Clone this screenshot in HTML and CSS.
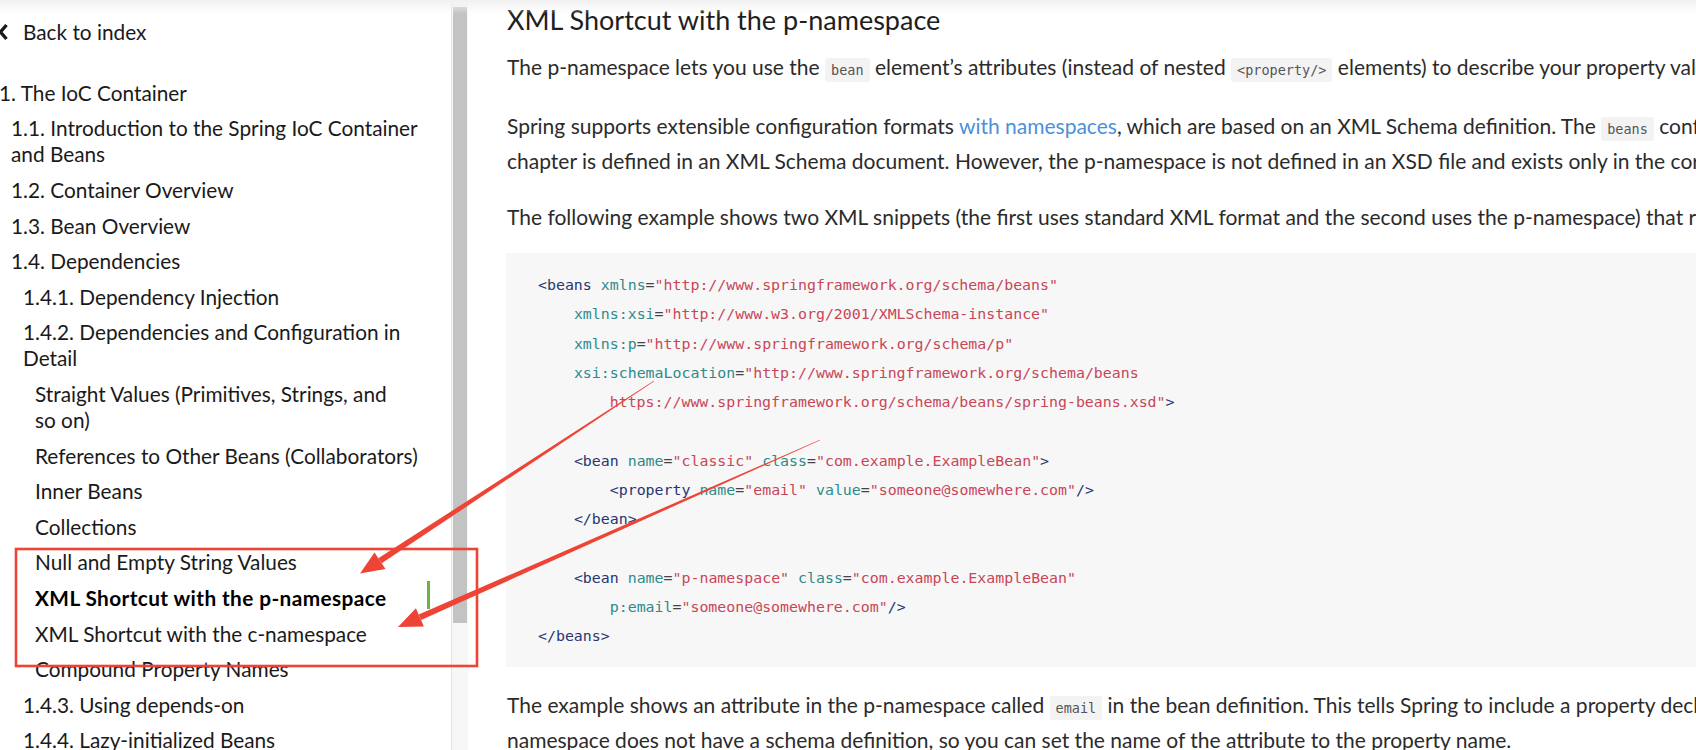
FILE: index.html
```html
<!DOCTYPE html>
<html lang="en">
<head>
<meta charset="utf-8">
<title>XML Shortcut with the p-namespace</title>
<link rel="stylesheet" href="styles.css">
</head>
<body>
<div class="topshade"></div>
<div class="page">
  <aside class="sidebar">
    <a class="back" href="#"><svg class="chev" width="10" height="18" viewBox="0 0 10 18"><polyline points="8.5,2 2.5,9 8.5,16" fill="none" stroke="#1a1a1a" stroke-width="3.4"/></svg><span>Back to index</span></a>
    <ul class="toc">
      <li><a href="#">1. The IoC Container</a>
        <ul>
          <li><a href="#">1.1. Introduction to the Spring IoC Container and Beans</a></li>
          <li><a href="#">1.2. Container Overview</a></li>
          <li><a href="#">1.3. Bean Overview</a></li>
          <li><a href="#">1.4. Dependencies</a>
            <ul>
              <li><a href="#">1.4.1. Dependency Injection</a></li>
              <li><a href="#">1.4.2. Dependencies and Configuration in Detail</a>
                <ul>
                  <li><a href="#">Straight Values (Primitives, Strings, and so&nbsp;on)</a></li>
                  <li><a href="#">References to Other Beans (Collaborators)</a></li>
                  <li><a href="#">Inner Beans</a></li>
                  <li><a href="#">Collections</a></li>
                  <li><a href="#">Null and Empty String Values</a></li>
                  <li><a href="#" class="active">XML Shortcut with the p-namespace</a></li>
                  <li><a href="#">XML Shortcut with the c-namespace</a></li>
                  <li><a href="#">Compound Property Names</a></li>
                </ul>
              </li>
              <li><a href="#">1.4.3. Using depends-on</a></li>
              <li><a href="#">1.4.4. Lazy-initialized Beans</a></li>
            </ul>
          </li>
        </ul>
      </li>
    </ul>
  </aside>
  <div class="scrollbar"><div class="thumb"></div></div>
  <main class="content">
    <h2>XML Shortcut with the p-namespace</h2>
    <p class="first">The p-namespace lets you use the <code>bean</code> element’s attributes (instead of nested <code>&lt;property/&gt;</code> elements) to describe your property values collaborating beans, or both.</p>
    <p>Spring supports extensible configuration formats <a href="#">with namespaces</a>, which are based on an XML Schema definition. The <code>beans</code> configuration format discussed in this<br>chapter is defined in an XML Schema document. However, the p-namespace is not defined in an XSD file and exists only in the core of Spring.</p>
    <p>The following example shows two XML snippets (the first uses standard XML format and the second uses the p-namespace) that resolve to the same result:</p>
<pre class="listing"><span class="t">&lt;beans</span> <span class="a">xmlns</span>=<span class="s">"http://www.springframework.org/schema/beans"</span>
    <span class="a">xmlns:xsi</span>=<span class="s">"http://www.w3.org/2001/XMLSchema-instance"</span>
    <span class="a">xmlns:p</span>=<span class="s">"http://www.springframework.org/schema/p"</span>
    <span class="a">xsi:schemaLocation</span>=<span class="s">"http://www.springframework.org/schema/beans
        https://www.springframework.org/schema/beans/spring-beans.xsd"</span><span class="t">&gt;</span>

    <span class="t">&lt;bean</span> <span class="a">name</span>=<span class="s">"classic"</span> <span class="a">class</span>=<span class="s">"com.example.ExampleBean"</span><span class="t">&gt;</span>
        <span class="t">&lt;property</span> <span class="a">name</span>=<span class="s">"email"</span> <span class="a">value</span>=<span class="s">"someone@somewhere.com"</span><span class="t">/&gt;</span>
    <span class="t">&lt;/bean&gt;</span>

    <span class="t">&lt;bean</span> <span class="a">name</span>=<span class="s">"p-namespace"</span> <span class="a">class</span>=<span class="s">"com.example.ExampleBean"</span>
        <span class="a">p:email</span>=<span class="s">"someone@somewhere.com"</span><span class="t">/&gt;</span>
<span class="t">&lt;/beans&gt;</span></pre>
    <p class="after">The example shows an attribute in the p-namespace called <code>email</code> in the bean definition. This tells Spring to include a property declaration. As previously mentioned, the p-<br>namespace does not have a schema definition, so you can set the name of the attribute to the property name.</p>
  </main>
</div>
<svg class="annotations" width="1696" height="750" viewBox="0 0 1696 750">
  <rect x="16" y="549" width="461" height="117" fill="none" stroke="#ee4436" stroke-width="2.6"/>
  <polygon fill="#ee4436" points="654.2,381.3 653.8,380.7 378.3,558.3 381.7,563.3"/>
  <polygon fill="#ee4436" points="360,573.5 374.5,552.5 385.5,569.1"/>
  <polygon fill="#ee4436" points="820.1,440.3 819.9,439.7 418.7,614.6 421.1,620.0"/>
  <polygon fill="#ee4436" points="398,627 415.9,608.2 423.9,626.4"/>
</svg>
</body>
</html>
```
FILE: styles.css
```css
html, body {
  margin: 0;
  padding: 0;
}
body {
  width: 1696px;
  height: 750px;
  overflow: hidden;
  background: #ffffff;
  font-family: Lato, "Liberation Sans", sans-serif;
  position: relative;
}
.topshade {
  position: absolute;
  left: 0;
  top: 0;
  width: 100%;
  height: 14px;
  background: linear-gradient(#f1f1f1, rgba(255,255,255,0));
  pointer-events: none;
  z-index: 2;
}
.page {
  display: flex;
  height: 750px;
}

/* sidebar */
.sidebar {
  flex: 0 0 451px;
  box-sizing: border-box;
  padding: 19px 22px 0 0;
  font-size: 20.8px;
  color: #1a1a1a;
  overflow: hidden;
}
.back {
  display: flex;
  align-items: center;
  gap: 15px;
  height: 26px;
  line-height: 26px;
  margin-left: -2px;
  color: #1a1a1a;
  text-decoration: none;
}
.chev {
  flex: 0 0 auto;
}
.toc {
  list-style: none;
  margin: 30px 0 0 -1px;
  padding: 0;
}
.toc ul {
  list-style: none;
  margin: 0;
  padding-left: 12px;
}
.toc a {
  display: block;
  padding: 4.8px 0;
  line-height: 26px;
  color: inherit;
  text-decoration: none;
}
.toc a.active {
  position: relative;
  font-weight: 700;
  letter-spacing: 0.4px;
  color: #000;
}
.toc a.active::after {
  content: "";
  position: absolute;
  right: -1px;
  top: 1px;
  width: 3px;
  height: 28px;
  background: #6db33f;
}

/* scrollbar */
.scrollbar {
  flex: 0 0 17px;
  box-sizing: border-box;
  background: #f7f7f7;
  border-left: 1px solid #e4e4e4;
  padding: 7px 1px 0 1px;
}
.thumb {
  height: 616px;
  background: #c3c3c3;
}

/* content */
.content {
  flex: 0 0 1500px;
  box-sizing: border-box;
  padding: 4px 0 0 39px;
  color: #2b2b2b;
  font-size: 21px;
}
.content h2 {
  margin: 0;
  font-size: 27px;
  font-weight: 400;
  line-height: 32px;
  color: #1e1e1e;
}
.content p {
  margin: 24px 0 0;
  line-height: 32px;
  white-space: nowrap;
}
.content p.first {
  margin-top: 15px;
}
.content p.after {
  margin-top: 22px;
}
.content a {
  color: #4a90dc;
  text-decoration: none;
}
.content code {
  font-family: "DejaVu Sans Mono", "Liberation Mono", monospace;
  font-size: 13.5px;
  color: #555;
  background: #f3f3f3;
  padding: 4px 6px;
  border-radius: 3px;
}
.listing {
  margin: 20px 0 0 -1px;
  padding: 18px 0 16px 32px;
  background: #f7f7f7;
  font-family: "DejaVu Sans Mono", "Liberation Mono", monospace;
  font-size: 14.9px;
  line-height: 29.25px;
  color: #444;
}
.listing .t { color: #283571; }
.listing .a { color: #2f8a8c; }
.listing .s { color: #c84657; }

/* annotation overlay */
.annotations {
  position: absolute;
  left: 0;
  top: 0;
  pointer-events: none;
  z-index: 3;
}
```
